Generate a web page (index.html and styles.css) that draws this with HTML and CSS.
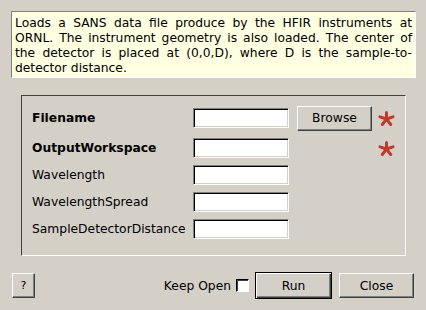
FILE: index.html
```html
<!DOCTYPE html>
<html>
<head>
<meta charset="utf-8">
<link rel="stylesheet" href="styles.css">
</head>
<body>
<div class="dialog">
  <div class="desc">Loads a SANS data file produce by the HFIR instruments at ORNL. The instrument geometry is also loaded. The center of the detector is placed at (0,0,D), where D is the sample-to-detector distance.</div>
  <div class="group">
    <div class="grid">
      <span class="lbl bold">Filename</span>
      <span class="input"></span>
      <button class="btn browse">Browse</button>
      <span class="star"><svg width="17" height="15" viewBox="0 0 17 15"><g stroke="#c0392b" stroke-width="3" stroke-linecap="round"><line x1="8.5" y1="8" x2="8.5" y2="1.5"/><line x1="8.5" y1="8" x2="2" y2="5.8"/><line x1="8.5" y1="8" x2="15" y2="5.8"/><line x1="8.5" y1="8" x2="4.3" y2="13.5"/><line x1="8.5" y1="8" x2="12.7" y2="13.5"/></g></svg></span>

      <span class="lbl bold">OutputWorkspace</span>
      <span class="input"></span>
      <span></span>
      <span class="star"><svg width="17" height="15" viewBox="0 0 17 15"><g stroke="#c0392b" stroke-width="3" stroke-linecap="round"><line x1="8.5" y1="8" x2="8.5" y2="1.5"/><line x1="8.5" y1="8" x2="2" y2="5.8"/><line x1="8.5" y1="8" x2="15" y2="5.8"/><line x1="8.5" y1="8" x2="4.3" y2="13.5"/><line x1="8.5" y1="8" x2="12.7" y2="13.5"/></g></svg></span>

      <span class="lbl">Wavelength</span>
      <span class="input"></span>
      <span></span>
      <span></span>

      <span class="lbl">WavelengthSpread</span>
      <span class="input"></span>
      <span></span>
      <span></span>

      <span class="lbl">SampleDetectorDistance</span>
      <span class="input"></span>
      <span></span>
      <span></span>
    </div>
  </div>
  <div class="footer">
    <button class="btn help">?</button>
    <span class="spacer"></span>
    <span class="keep">Keep Open</span>
    <span class="check"></span>
    <button class="btn run">Run</button>
    <button class="btn close">Close</button>
  </div>
</div>
</body>
</html>
```

FILE: styles.css
```css
html, body {
  margin: 0;
  padding: 0;
  background: #d4d0c8;
}
body {
  font-family: "DejaVu Sans", "Noto Sans", sans-serif;
  font-size: 12.3px;
  color: #000;
}
.dialog {
  width: 426px;
  height: 310px;
  box-sizing: border-box;
  padding: 11px 0 0 11px;
  display: flex;
  flex-direction: column;
}
.desc {
  width: 405px;
  height: 67px;
  box-sizing: border-box;
  background: #ffffe1;
  border: 1px solid;
  border-color: #808080 #ffffff #ffffff #808080;
  padding: 4px 3px 0 3px;
  line-height: 15px;
  text-align: justify;
}
.group {
  margin: 17px 0 0 10px;
  width: 385px;
  height: 161px;
  box-sizing: border-box;
  border: 1px solid;
  border-color: #404040 #ffffff #ffffff #404040;
  padding: 9px 0 0 10px;
}
.grid {
  display: grid;
  grid-template-columns: 161px 96px 83px 30px;
  grid-template-rows: 26px 20px 20px 20px 20px;
  row-gap: 7px;
  align-items: center;
}
.lbl {
  white-space: nowrap;
}
.bold {
  font-weight: bold;
}
.input {
  display: block;
  width: 96px;
  height: 20px;
  box-sizing: border-box;
  background: #fff;
  border: 1px solid;
  border-color: #808080 #ffffff #ffffff #808080;
  box-shadow: inset 1px 1px 0 #000, inset -1px -1px 0 #d4d0c8;
}
.btn {
  font-family: inherit;
  font-size: inherit;
  color: #000;
  background: #d4d0c8;
  padding: 0;
  margin: 0;
  box-sizing: border-box;
  border: 1px solid;
  border-color: #ffffff #404040 #404040 #ffffff;
  box-shadow: inset -1px -1px 0 #808080;
}
.browse {
  width: 75px;
  height: 25px;
  margin-left: 8px;
}
.star {
  display: flex;
  padding-left: 6px;
  height: 15px;
}
.star svg {
  display: block;
}
.footer {
  margin-top: 16px;
  margin-left: -11px;
  width: 426px;
  box-sizing: border-box;
  padding: 0 12px;
  height: 27px;
  display: flex;
  align-items: center;
}
.help {
  width: 23px;
  height: 25px;
  font-size: 11px;
}
.spacer {
  flex: 1;
}
.keep {
  margin-right: 5px;
}
.check {
  display: block;
  width: 13px;
  height: 13px;
  box-sizing: border-box;
  background: #fff;
  border: 1px solid;
  border-color: #000 #ffffff #ffffff #000;
  box-shadow: inset 1px 1px 0 #404040;
  margin-right: 6px;
}
.run {
  width: 77px;
  height: 27px;
  border: 1px solid #000;
  box-shadow: inset 1px 1px 0 #ffffff, inset -1px -1px 0 #404040, inset -2px -2px 0 #808080;
}
.close {
  width: 75px;
  height: 25px;
  margin-left: 7px;
}
```
